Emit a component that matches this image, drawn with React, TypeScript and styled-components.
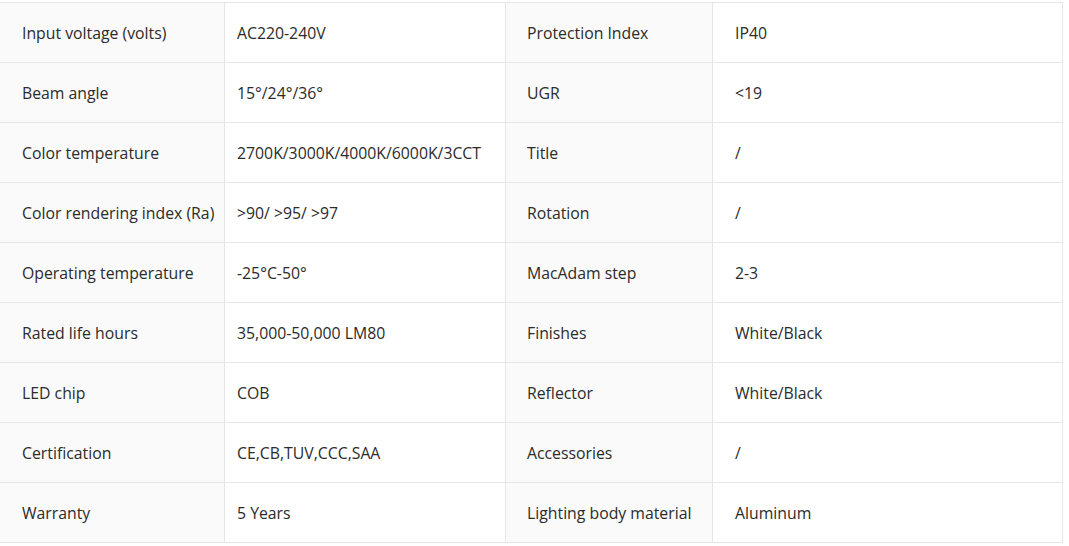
import React from "react";
import styled, { createGlobalStyle } from "styled-components";

const Global = createGlobalStyle`
  html, body { margin: 0; padding: 0; background: #ffffff; }
  body { font-family: "Open Sans", "Noto Sans", sans-serif; }
`;

const Table = styled.div`
  margin-top: 2px;
  display: grid;
  grid-template-columns: 225px 281px 207px 350px;
  border-top: 1px solid #e6e6e6;
  width: 1063px;
  box-sizing: border-box;
`;

const Cell = styled.div<{ $label?: boolean; $pad: number }>`
  box-sizing: border-box;
  height: 60px;
  display: flex;
  align-items: center;
  padding-left: ${(p) => p.$pad}px;
  padding-top: 1px;
  border-right: 1px solid #e6e6e6;
  border-bottom: 1px solid #e6e6e6;
  background: ${(p) => (p.$label ? "#fafafa" : "#ffffff")};
  color: #2b2b2b;
  font-size: 15.8px;
  white-space: nowrap;
`;

const rows: [string, string, string, string][] = [
  ["Input voltage (volts)", "AC220-240V", "Protection Index", "IP40"],
  ["Beam angle", "15°/24°/36°", "UGR", "<19"],
  ["Color temperature", "2700K/3000K/4000K/6000K/3CCT", "Title", "/"],
  ["Color rendering index (Ra)", ">90/ >95/ >97", "Rotation", "/"],
  ["Operating temperature", "-25°C-50°", "MacAdam step", "2-3"],
  ["Rated life hours", "35,000-50,000 LM80", "Finishes", "White/Black"],
  ["LED chip", "COB", "Reflector", "White/Black"],
  ["Certification", "CE,CB,TUV,CCC,SAA", "Accessories", "/"],
  ["Warranty", "5 Years", "Lighting body material", "Aluminum"],
];

const pads = [22, 12, 21, 22];

export default function App() {
  return (
    <>
      <Global />
      <Table>
        {rows.map((r, i) =>
          r.map((t, j) => (
            <Cell key={`${i}-${j}`} $label={j % 2 === 0} $pad={pads[j]}>
              {t}
            </Cell>
          ))
        )}
      </Table>
    </>
  );
}
